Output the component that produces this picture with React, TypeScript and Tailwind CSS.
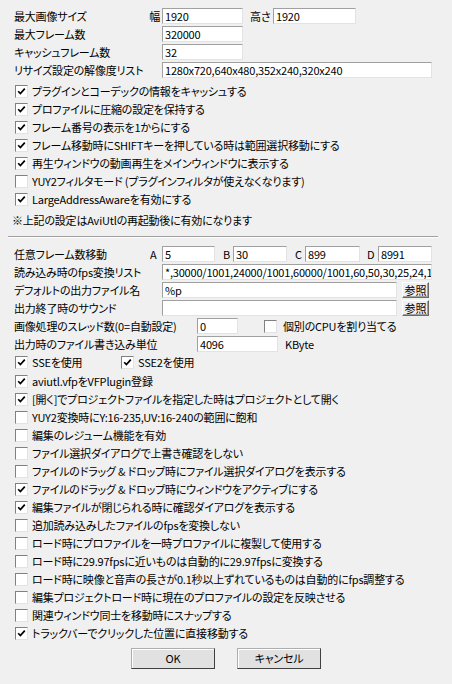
import React from 'react'

const FONT = "font-['Noto_Sans_CJK_JP','Noto_Sans',sans-serif] [font-feature-settings:'palt']"

function TextBox({ w, value = '' }: { w: string; value?: string }) {
  return (
    <div
      className={`${w} h-[16px] shrink-0 overflow-hidden whitespace-nowrap bg-white border border-t-[#a0a0a0] border-l-[#a0a0a0] border-b-[#e3e3e3] border-r-[#e3e3e3] pl-[2px] leading-[14px]`}
    >
      {value}
    </div>
  )
}

function Box({ checked }: { checked: boolean }) {
  return (
    <span className="w-[13px] h-[13px] shrink-0 bg-white border border-t-[#808080] border-l-[#808080] border-b-[#e3e3e3] border-r-[#e3e3e3] flex items-center justify-center">
      {checked && (
        <svg width="9" height="9" viewBox="0 0 9 9">
          <path d="M1.2 4.2 L3.4 6.6 L7.8 1.6" stroke="#000" strokeWidth="1.7" fill="none" />
        </svg>
      )}
    </span>
  )
}

function Check({ checked, label, className = '' }: { checked: boolean; label: string; className?: string }) {
  return (
    <div className={`h-[18px] flex items-center ${className}`}>
      <span className="ml-[1px]"><Box checked={checked} /></span>
      <span className="ml-[4px] whitespace-nowrap">{label}</span>
    </div>
  )
}

function Btn({ label, w }: { label: string; w: string }) {
  return (
    <div className={`${w} h-[16px] shrink-0 bg-[#f0f0f0] border border-t-white border-l-white border-b-[#696969] border-r-[#696969] shadow-[inset_-1px_-1px_0_#a0a0a0] flex items-center justify-center tracking-normal`}>
      {label}
    </div>
  )
}

const row = 'h-[18px] flex items-center whitespace-nowrap'

const topChecks: [boolean, string][] = [
  [true, 'プラグインとコーデックの情報をキャッシュする'],
  [true, 'プロファイルに圧縮の設定を保持する'],
  [true, 'フレーム番号の表示を1からにする'],
  [true, 'フレーム移動時にSHIFTキーを押している時は範囲選択移動にする'],
  [true, '再生ウィンドウの動画再生をメインウィンドウに表示する'],
  [false, 'YUY2フィルタモード (プラグインフィルタが使えなくなります)'],
  [true, 'LargeAddressAwareを有効にする'],
]

const bottomChecks: [boolean, string][] = [
  [true, 'aviutl.vfpをVFPlugin登録'],
  [true, '[開く]でプロジェクトファイルを指定した時はプロジェクトとして開く'],
  [false, 'YUY2変換時にY:16-235,UV:16-240の範囲に飽和'],
  [false, '編集のレジューム機能を有効'],
  [false, 'ファイル選択ダイアログで上書き確認をしない'],
  [false, 'ファイルのドラッグ & ドロップ時にファイル選択ダイアログを表示する'],
  [true, 'ファイルのドラッグ & ドロップ時にウィンドウをアクティブにする'],
  [true, '編集ファイルが閉じられる時に確認ダイアログを表示する'],
  [false, '追加読み込みしたファイルのfpsを変換しない'],
  [false, 'ロード時にプロファイルを一時プロファイルに複製して使用する'],
  [false, 'ロード時に29.97fpsに近いものは自動的に29.97fpsに変換する'],
  [false, 'ロード時に映像と音声の長さが0.1秒以上ずれているものは自動的にfps調整する'],
  [false, '編集プロジェクトロード時に現在のプロファイルの設定を反映させる'],
  [false, '関連ウィンドウ同士を移動時にスナップする'],
  [true, 'トラックバーでクリックした位置に直接移動する'],
]

export default function App() {
  return (
    <div className={`w-[452px] h-[684px] overflow-hidden bg-[#f0f0f0] text-[11px] tracking-[-0.2px] leading-none text-black pt-[7px] pl-[14px] ${FONT}`}>
      {/* image / frame limits */}
      <div className={row}>
        <div className="w-[148px] flex justify-between pr-[2px]">
          <span>最大画像サイズ</span>
          <span>幅</span>
        </div>
        <TextBox w="w-[81px]" value="1920" />
        <span className="ml-[7px] w-[23px]">高さ</span>
        <TextBox w="w-[83px]" value="1920" />
      </div>
      <div className={row}>
        <span className="w-[148px]">最大フレーム数</span>
        <TextBox w="w-[81px]" value="320000" />
      </div>
      <div className={row}>
        <span className="w-[148px]">キャッシュフレーム数</span>
        <TextBox w="w-[81px]" value="32" />
      </div>
      <div className={row}>
        <span className="w-[148px]">リサイズ設定の解像度リスト</span>
        <TextBox w="w-[270px]" value="1280x720,640x480,352x240,320x240" />
      </div>

      <div className="mt-[3px]">
        {topChecks.map(([c, l]) => <Check key={l} checked={c} label={l} />)}
      </div>
      <div className={`${row} mt-[3px] -ml-[2px]`}>※上記の設定はAviUtlの再起動後に有効になります</div>

      <div className="mt-[7px] -ml-[6px] w-[430px] border-t border-t-[#a0a0a0] border-b border-b-white" />

      {/* general settings */}
      <div className={`${row} mt-[7px]`}>
        <span className="w-[134px]">任意フレーム数移動</span>
        <span className="w-[14px] pl-[2px]">A</span>
        <TextBox w="w-[53px]" value="5" />
        <span className="w-[18px] pl-[8px]">B</span>
        <TextBox w="w-[54px]" value="30" />
        <span className="w-[18px] pl-[8px]">C</span>
        <TextBox w="w-[55px]" value="899" />
        <span className="w-[18px] pl-[7px]">D</span>
        <TextBox w="w-[54px]" value="8991" />
      </div>
      <div className={row}>
        <span className="w-[148px]">読み込み時のfps変換リスト</span>
        <TextBox w="w-[270px]" value="*,30000/1001,24000/1001,60000/1001,60,50,30,25,24,15" />
      </div>
      <div className={row}>
        <span className="w-[148px]">デフォルトの出力ファイル名</span>
        <TextBox w="w-[235px]" value="%p" />
        <span className="ml-[5px]"><Btn label="参照" w="w-[27px]" /></span>
      </div>
      <div className={row}>
        <span className="w-[148px]">出力終了時のサウンド</span>
        <TextBox w="w-[235px]" />
        <span className="ml-[5px]"><Btn label="参照" w="w-[27px]" /></span>
      </div>
      <div className={row}>
        <span className="w-[183px]">画像処理のスレッド数(0=自動設定)</span>
        <TextBox w="w-[41px]" value="0" />
        <span className="ml-[26px]"><Box checked={false} /></span>
        <span className="ml-[6px]">個別のCPUを割り当てる</span>
      </div>
      <div className={row}>
        <span className="w-[183px]">出力時のファイル書き込み単位</span>
        <TextBox w="w-[81px]" value="4096" />
        <span className="ml-[7px]">KByte</span>
      </div>
      <div className={row}>
        <Check checked label="SSEを使用" className="w-[106px]" />
        <Check checked label="SSE2を使用" />
      </div>

      <div className="mt-[1px]">
        {bottomChecks.map(([c, l]) => <Check key={l} checked={c} label={l} />)}
      </div>

      <div className="mt-[6px] ml-[117px] flex gap-[22px]">
        {['OK', 'キャンセル'].map(t => (
          <div key={t} className="w-[84px] h-[21px] bg-[#e1e1e1] border border-[#adadad] border-b-[#404040] border-r-[#404040] shadow-[inset_1px_1px_0_#fff] flex items-center justify-center">
            {t}
          </div>
        ))}
      </div>
    </div>
  )
}
